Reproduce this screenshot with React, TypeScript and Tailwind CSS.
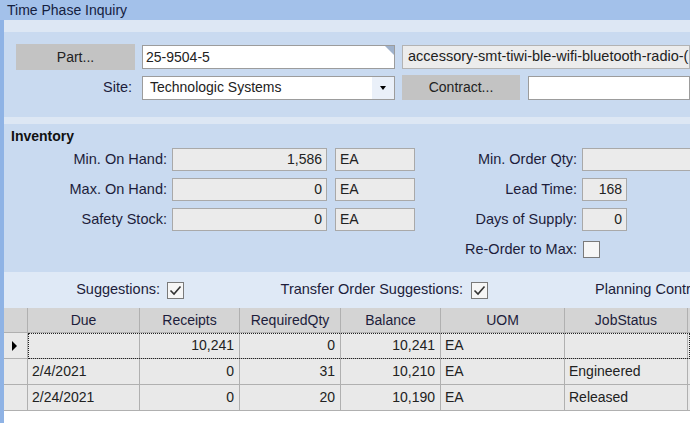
import React from "react";

const font = { fontFamily: '"Liberation Sans", Arial, sans-serif' };

function Box({
  className = "",
  value = "",
  right = false,
}: {
  className?: string;
  value?: string;
  right?: boolean;
}) {
  return (
    <div
      className={`h-[23px] shrink-0 border border-[#a9a9a9] bg-[#ebebeb] flex items-center overflow-hidden whitespace-nowrap text-[#222] ${
        right ? "justify-end pr-[4px]" : "pl-[4px]"
      } ${className}`}
    >
      {value}
    </div>
  );
}

function CheckBox({ checked = false }: { checked?: boolean }) {
  return (
    <div className="w-[17px] h-[17px] shrink-0 border border-[#7a7a7a] bg-[#f6f6f6] flex items-center justify-center">
      {checked && (
        <svg width="13" height="11" viewBox="0 0 13 11">
          <path d="M1.5 5.5 L5 9 L11.5 1.5" fill="none" stroke="#333" strokeWidth="1.6" />
        </svg>
      )}
    </div>
  );
}

function InvRow({
  label,
  value,
  rlabel,
  rnode,
}: {
  label?: string;
  value?: string;
  rlabel: string;
  rnode: React.ReactNode;
}) {
  return (
    <div className="flex items-center h-[23px]">
      <div className="w-[163px] shrink-0 text-right text-[14.5px]">{label}</div>
      {label ? (
        <>
          <Box className="ml-[5px] w-[155px]" value={value} right />
          <Box className="ml-[8px] w-[80px]" value="EA" />
        </>
      ) : (
        <div className="ml-[5px] w-[243px] shrink-0" />
      )}
      <div className="w-[162px] shrink-0 text-right text-[14.5px]">{rlabel}</div>
      <div className="ml-[5px] shrink-0">{rnode}</div>
    </div>
  );
}

const cols = [
  { name: "Due", w: "w-[112px]" },
  { name: "Receipts", w: "w-[100px]" },
  { name: "RequiredQty", w: "w-[101px]" },
  { name: "Balance", w: "w-[100px]" },
  { name: "UOM", w: "w-[124px]" },
  { name: "JobStatus", w: "w-[123px]" },
];

const rows = [
  ["", "10,241", "0", "10,241", "EA", ""],
  ["2/4/2021", "0", "31", "10,210", "EA", "Engineered"],
  ["2/24/2021", "0", "20", "10,190", "EA", "Released"],
];

const rightCols = [1, 2, 3];

export default function App() {
  return (
    <div
      className="w-[690px] h-[423px] overflow-hidden flex flex-col text-[14px] text-[#1d1d3b] bg-white"
      style={font}
    >
      <div className="h-[20px] bg-[#a3c1ea] pl-[7px] flex items-center text-[#14203f] shrink-0">
        Time Phase Inquiry
      </div>
      <div className="flex flex-1 min-h-0">
        <div className="w-[4px] bg-[#8fb3e5] shrink-0" />
        <div className="flex-1 min-w-0 flex flex-col">
          <div className="h-[12px] bg-[#dde7f4] shrink-0" />

          {/* part / site */}
          <div className="h-[85px] bg-[#c9daf0] pt-[12px] pl-[12px] flex flex-col gap-[5px] shrink-0">
            <div className="flex items-center h-[26px]">
              <div className="w-[119px] h-[26px] shrink-0 bg-[#c3c3c3] flex items-center justify-center text-[#222]">
                Part...
              </div>
              <div className="relative ml-[7px] w-[253px] h-[24px] shrink-0 border border-[#9c9c9c] bg-white flex items-center pl-[3px] text-[#222]">
                25-9504-5
                <div className="absolute top-0 right-0 w-0 h-0 border-t-[9px] border-l-[9px] border-t-[#9fb2cc] border-l-transparent" />
              </div>
              <div className="ml-[7px] flex-1 min-w-0 h-[24px] border border-[#b3b3b3] bg-[#ececec] flex items-center pl-[5px] whitespace-nowrap overflow-hidden text-[#222] text-[14.5px]">
                accessory-smt-tiwi-ble-wifi-bluetooth-radio-(
              </div>
            </div>
            <div className="flex items-center h-[25px]">
              <div className="w-[119px] shrink-0 text-right pr-[3px] text-[14.5px]">Site:</div>
              <div className="ml-[7px] w-[253px] h-[24px] shrink-0 border border-[#9c9c9c] bg-white flex items-center text-[#222]">
                <div className="flex-1 pl-[7px]">Technologic Systems</div>
                <div className="w-[22px] h-full bg-[#eaf0f9] flex items-center justify-center">
                  <div className="w-0 h-0 border-l-[3px] border-r-[3px] border-t-[4px] border-l-transparent border-r-transparent border-t-black" />
                </div>
              </div>
              <div className="ml-[7px] w-[118px] h-[25px] shrink-0 bg-[#c3c3c3] flex items-center justify-center text-[#222]">
                Contract...
              </div>
              <div className="ml-[8px] flex-1 h-[24px] border border-[#9c9c9c] bg-white" />
            </div>
          </div>

          <div className="h-[7px] bg-[#dde7f4] shrink-0" />

          {/* inventory */}
          <div className="h-[148px] bg-[#c9daf0] shrink-0 pt-[3px]">
            <div className="pl-[7px] font-bold text-[#111] h-[18px] leading-[18px]">Inventory</div>
            <div className="mt-[3px] flex flex-col gap-[7px]">
              <InvRow
                label="Min. On Hand:"
                value="1,586"
                rlabel="Min. Order Qty:"
                rnode={<Box className="w-[120px]" />}
              />
              <InvRow
                label="Max. On Hand:"
                value="0"
                rlabel="Lead Time:"
                rnode={<Box className="w-[45px]" value="168" right />}
              />
              <InvRow
                label="Safety Stock:"
                value="0"
                rlabel="Days of Supply:"
                rnode={<Box className="w-[45px]" value="0" right />}
              />
              <InvRow rlabel="Re-Order to Max:" rnode={<div className="ml-[1px]"><CheckBox /></div>} />
            </div>
          </div>

          {/* suggestions */}
          <div className="h-[36px] bg-[#dfe9f6] shrink-0 flex items-center whitespace-nowrap text-[14.5px]">
            <div className="w-[156px] shrink-0 text-right">Suggestions:</div>
            <div className="ml-[7px]">
              <CheckBox checked />
            </div>
            <div className="w-[279px] shrink-0 text-right">Transfer Order Suggestions:</div>
            <div className="ml-[8px]">
              <CheckBox checked />
            </div>
            <div className="ml-[107px]">Planning Contract</div>
          </div>

          {/* grid */}
          <div className="flex-1 bg-white">
            <div className="flex h-[25px] bg-[#d4d4d4] border-b border-[#b0b0b0]">
              <div className="w-[24px] border-r border-[#b0b0b0] shrink-0" />
              {cols.map((c) => (
                <div
                  key={c.name}
                  className={`${c.w} shrink-0 border-r border-[#b0b0b0] flex items-center justify-center`}
                >
                  {c.name}
                </div>
              ))}
              <div className="flex-1" />
            </div>
            {rows.map((r, i) => (
              <div key={i} className="flex h-[26px] border-b border-[#b0b0b0] bg-[#e9e9e9]">
                <div className="w-[24px] border-r border-[#b0b0b0] shrink-0 flex items-center pl-[8px]">
                  {i === 0 && (
                    <div className="w-0 h-0 border-t-[5px] border-b-[5px] border-l-[5px] border-t-transparent border-b-transparent border-l-black" />
                  )}
                </div>
                <div className="relative flex flex-1">
                  {cols.map((c, j) => (
                    <div
                      key={c.name}
                      className={`${c.w} shrink-0 border-r border-[#b0b0b0] flex items-center text-[#222] ${
                        rightCols.includes(j) ? "justify-end pr-[5px]" : "pl-[4px]"
                      }`}
                    >
                      {r[j]}
                    </div>
                  ))}
                  <div className="flex-1" />
                  {i === 0 && (
                    <div className="absolute inset-0 -bottom-[1px] border border-dotted border-[#222] pointer-events-none" />
                  )}
                </div>
              </div>
            ))}
          </div>
        </div>
      </div>
    </div>
  );
}
